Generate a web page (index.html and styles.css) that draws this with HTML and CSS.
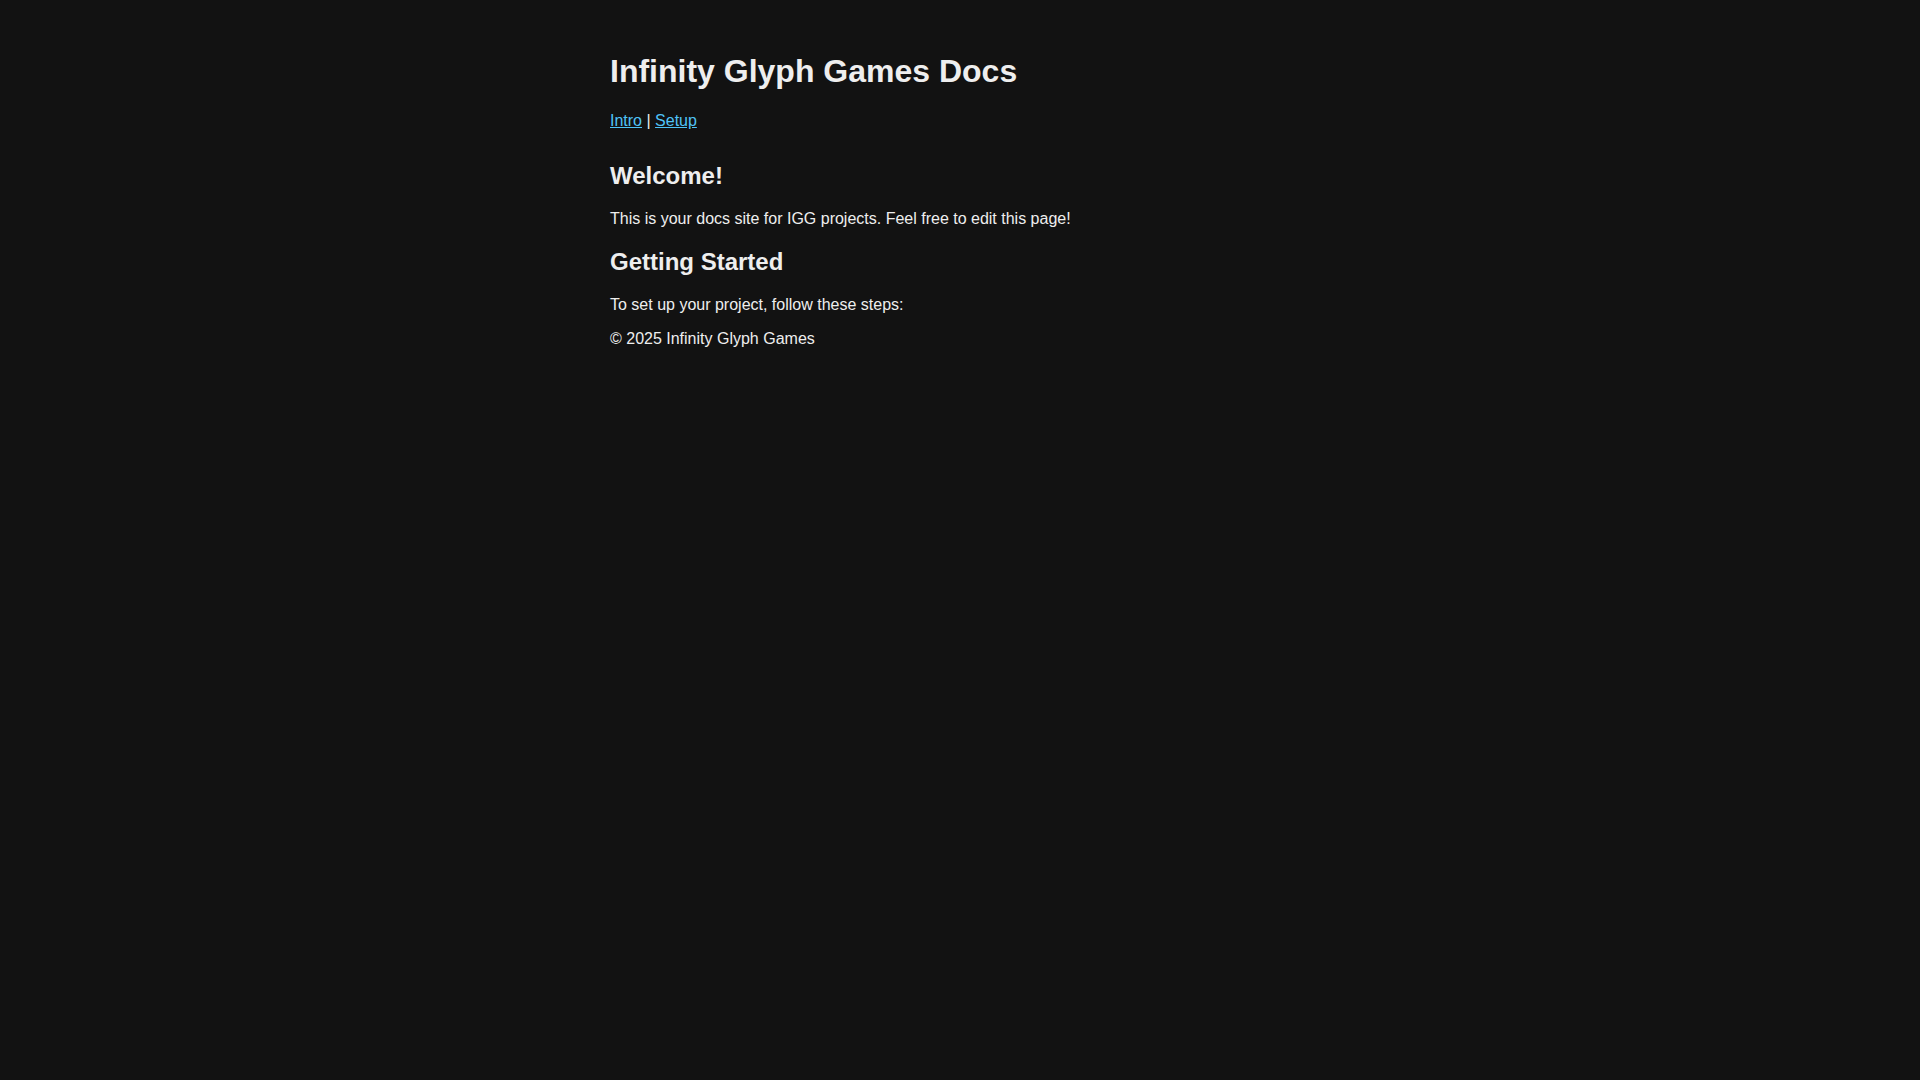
FILE: index.html
```html
<!DOCTYPE html>
<html lang="en">
<head>
<meta charset="utf-8">
<title>Infinity Glyph Games Docs</title>
<link rel="stylesheet" href="styles.css">
</head>
<body>
<div class="page">
  <header class="site-header">
    <h1>Infinity Glyph Games Docs</h1>
    <nav class="nav"><a href="#intro">Intro</a> | <a href="#setup">Setup</a></nav>
  </header>
  <main>
    <section id="intro">
      <h2>Welcome!</h2>
      <p>This is your docs site for IGG projects. Feel free to edit this page!</p>
    </section>
    <section id="setup">
      <h2>Getting Started</h2>
      <p>To set up your project, follow these steps:</p>
    </section>
  </main>
  <footer class="site-footer">
    <p>© 2025 Infinity Glyph Games</p>
  </footer>
</div>
</body>
</html>
```
FILE: styles.css
```css
html, body {
  background: #121212;
}
body {
  margin: 0;
  padding: 2rem;
  color: #eeeeee;
  font-family: "Liberation Sans", Arial, sans-serif;
  font-size: 16px;
}
.page {
  max-width: 700px;
  margin: 0 auto;
}
h1 {
  font-size: 2em;
  margin: 0.67em 0;
}
h2 {
  font-size: 1.5em;
  margin: 0.83em 0;
}
p {
  margin: 1em 0;
}
.site-header {
  display: flow-root;
}
.nav {
  margin: 1em 0 12px;
}
.nav a {
  color: #4fc3f7;
}
```
